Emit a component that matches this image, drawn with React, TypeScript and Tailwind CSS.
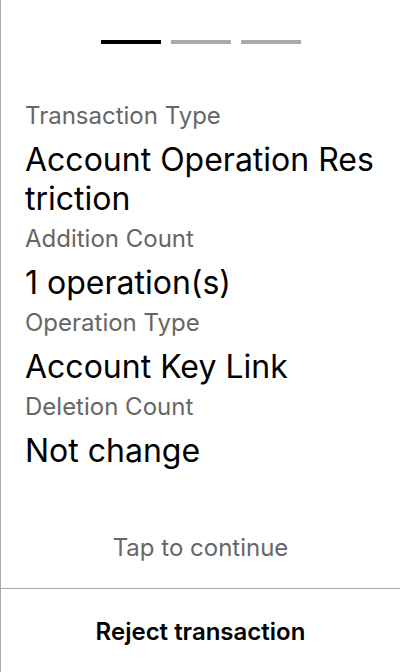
const rows = [
  { label: "Transaction Type", value: "Account Operation Restriction" },
  { label: "Addition Count", value: "1 operation(s)" },
  { label: "Operation Type", value: "Account Key Link" },
  { label: "Deletion Count", value: "Not change" },
];

export default function App() {
  return (
    <div
      className="flex h-[672px] w-[400px] flex-col border-l border-[#aaaaaa] bg-white"
      style={{ fontFamily: "Inter, 'Noto Sans', sans-serif" }}
    >
      <div className="flex justify-center gap-[10px] pt-[40px]">
        <div className="h-[4px] w-[60px] bg-black" />
        <div className="h-[4px] w-[60px] bg-[#aaaaaa]" />
        <div className="h-[4px] w-[60px] bg-[#aaaaaa]" />
      </div>

      <div className="mt-[57px] flex flex-col pl-[24px] pr-[25px]">
        {rows.map((r) => (
          <div key={r.label} className="flex flex-col">
            <div className="text-[24px] leading-[30px] text-[#666666]">{r.label}</div>
            <div className="mt-[9px] mb-[6px] break-all text-[32px] leading-[39px] text-black">
              {r.value}
            </div>
          </div>
        ))}
      </div>

      <div className="mt-auto flex justify-center pb-[25px] text-[24px] leading-[30px] text-[#666666]">
        Tap to continue
      </div>
      <div className="flex h-[84px] items-center justify-center border-t border-[#aaaaaa] pt-[2px] text-[24px] font-semibold text-black">
        Reject transaction
      </div>
    </div>
  );
}
